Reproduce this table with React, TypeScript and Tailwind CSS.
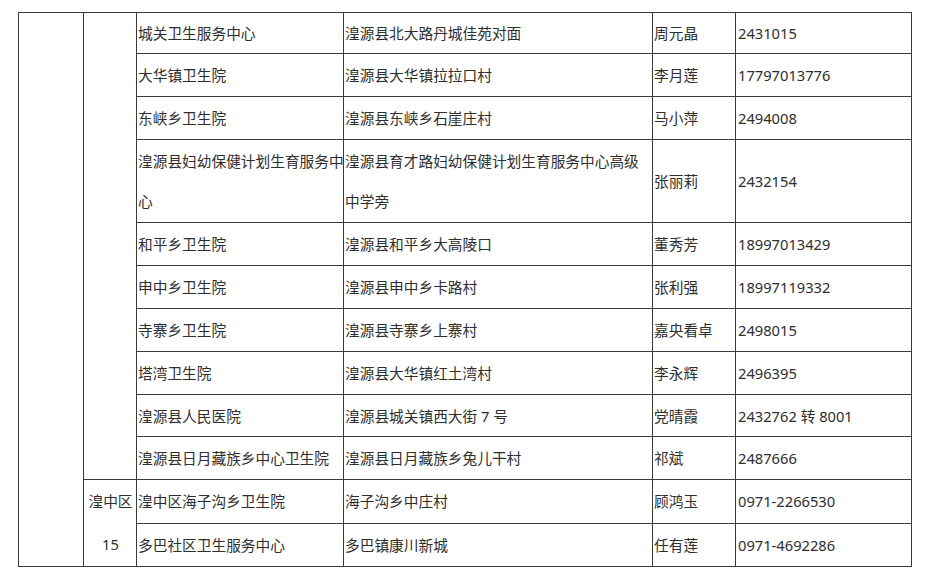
import React from "react";

type Row = { name: string[]; addr: string[]; person: string; phone: string; h: string };

const rows: Row[] = [
  { name: ["城关卫生服务中心"], addr: ["湟源县北大路丹城佳苑对面"], person: "周元晶", phone: "2431015", h: "h-[41px]" },
  { name: ["大华镇卫生院"], addr: ["湟源县大华镇拉拉口村"], person: "李月莲", phone: "17797013776", h: "h-[43px]" },
  { name: ["东峡乡卫生院"], addr: ["湟源县东峡乡石崖庄村"], person: "马小萍", phone: "2494008", h: "h-[43px]" },
  {
    name: ["湟源县妇幼保健计划生育服务中", "心"],
    addr: ["湟源县育才路妇幼保健计划生育服务中心高级", "中学旁"],
    person: "张丽莉",
    phone: "2432154",
    h: "h-[83px]",
  },
  { name: ["和平乡卫生院"], addr: ["湟源县和平乡大高陵口"], person: "董秀芳", phone: "18997013429", h: "h-[43px]" },
  { name: ["申中乡卫生院"], addr: ["湟源县申中乡卡路村"], person: "张利强", phone: "18997119332", h: "h-[43px]" },
  { name: ["寺寨乡卫生院"], addr: ["湟源县寺寨乡上寨村"], person: "嘉央看卓", phone: "2498015", h: "h-[43px]" },
  { name: ["塔湾卫生院"], addr: ["湟源县大华镇红土湾村"], person: "李永辉", phone: "2496395", h: "h-[43px]" },
  { name: ["湟源县人民医院"], addr: ["湟源县城关镇西大街 7 号"], person: "党晴霞", phone: "2432762 转 8001", h: "h-[42px]" },
  { name: ["湟源县日月藏族乡中心卫生院"], addr: ["湟源县日月藏族乡兔儿干村"], person: "祁斌", phone: "2487666", h: "h-[43px]" },
  { name: ["湟中区海子沟乡卫生院"], addr: ["海子沟乡中庄村"], person: "顾鸿玉", phone: "0971-2266530", h: "h-[43px]" },
  { name: ["多巴社区卫生服务中心"], addr: ["多巴镇康川新城"], person: "任有莲", phone: "0971-4692286", h: "h-[43px]" },
];

const cell = "border border-[#3a3a3a] pl-[1px] align-middle whitespace-nowrap";

function Lines({ lines }: { lines: string[] }) {
  if (lines.length === 1) return <>{lines[0]}</>;
  return (
    <div className="leading-[40px]">
      {lines.map((l) => (
        <div key={l}>{l}</div>
      ))}
    </div>
  );
}

export default function App() {
  return (
    <div className="min-h-[573px] w-[929px] bg-white pl-[18px] pt-[12px]">
      <table className="w-[893px] table-fixed border-collapse font-['Noto_Sans','Noto_Sans_CJK_SC',sans-serif] text-[14.7px] leading-[20px] text-[#2e2e2e]">
        <colgroup>
          <col className="w-[65px]" />
          <col className="w-[53px]" />
          <col className="w-[207px]" />
          <col className="w-[309px]" />
          <col className="w-[83px]" />
          <col className="w-[176px]" />
        </colgroup>
        <tbody>
          {rows.map((r, i) => (
            <tr key={r.name[0]} className={r.h}>
              {i === 0 ? <td rowSpan={12} className={cell} /> : null}
              {i === 0 ? <td rowSpan={10} className={cell} /> : null}
              {i === 10 ? (
                <td rowSpan={2} className={`${cell} pl-0 text-center leading-[43px]`}>
                  <div>湟中区</div>
                  <div>15</div>
                </td>
              ) : null}
              <td className={cell}>
                <Lines lines={r.name} />
              </td>
              <td className={cell}>
                <Lines lines={r.addr} />
              </td>
              <td className={cell}>{r.person}</td>
              <td className={`${cell} pl-[2px]`}>{r.phone}</td>
            </tr>
          ))}
        </tbody>
      </table>
    </div>
  );
}
